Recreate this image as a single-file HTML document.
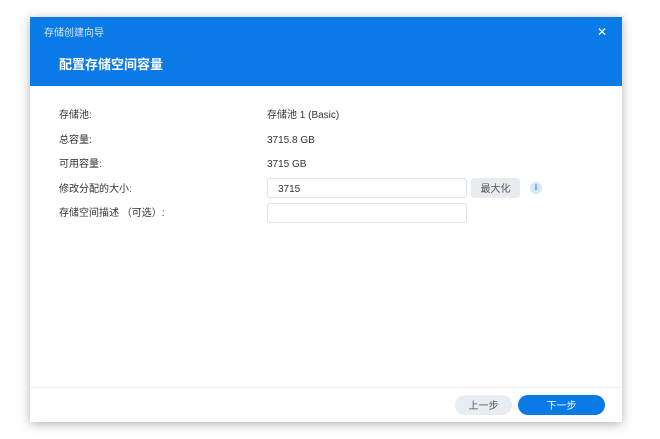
<!DOCTYPE html>
<html><head><meta charset="utf-8"><style>
body{margin:0;width:660px;height:439px;background:#fff;font-family:"Liberation Sans","Noto Sans CJK SC",sans-serif;position:relative;overflow:hidden}
.dlg{position:absolute;left:30px;top:17px;width:592px;height:405px;background:#fff;box-shadow:0 2px 10px rgba(0,0,0,.3)}
.hd{position:absolute;left:0;top:0;width:592px;height:69px;background:#0a7ae6;color:#fff}
.t1{position:absolute;left:14px;top:10px;font-size:10px;line-height:14px;color:#d8e9fb}
.t2{position:absolute;left:29px;top:40px;font-size:13px;line-height:16px;font-weight:bold}
.x{position:absolute;right:15px;top:8px;font-size:12px;line-height:14px}
.l,.v{position:absolute;font-size:10px;line-height:14px;height:14px;color:#333}
.l{left:29px}.v{left:237px}
.in{position:absolute;left:237px;width:200px;height:20px;border:1px solid #dde3ea;border-radius:3px;box-sizing:border-box;font-size:10px;line-height:18px;padding:2px 10px 0;color:#333}
.btn{position:absolute;border-radius:10px;font-size:10px;text-align:center;height:20px;line-height:20px;box-sizing:border-box;padding-top:3px;line-height:17px}
.ft{position:absolute;left:0;top:370px;width:592px;border-top:1px solid #eef1f4}
</style></head><body>
<div class="dlg">
<div class="hd"><div class="t1">存储创建向导</div><div class="t2">配置存储空间容量</div><div class="x">✕</div></div>
<div class="l" style="top:92px">存储池:</div><div class="v" style="top:92px">存储池 1 (Basic)</div>
<div class="l" style="top:117px">总容量:</div><div class="v" style="top:117px">3715.8 GB</div>
<div class="l" style="top:141px">可用容量:</div><div class="v" style="top:141px">3715 GB</div>
<div class="l" style="top:166px">修改分配的大小:</div><div class="in" style="top:161px">3715</div>
<div class="btn" style="left:441px;top:161px;width:49px;background:#e8ecf1;border-radius:3px;color:#555">最大化</div>
<div style="position:absolute;left:500px;top:165px;width:12px;height:12px;border-radius:50%;background:#d6e8fb;color:#1a7ce6;font-size:8px;font-weight:bold;text-align:center;line-height:12px">i</div>
<div class="l" style="top:190px">存储空间描述 （可选）:</div><div class="in" style="top:186px"></div>
<div class="ft"></div>
<div class="btn" style="left:425px;top:378px;width:57px;background:#e8edf3;color:#555">上一步</div>
<div class="btn" style="left:488px;top:378px;width:87px;background:#0a7ae6;color:#fff">下一步</div>
</div>
</body></html>
